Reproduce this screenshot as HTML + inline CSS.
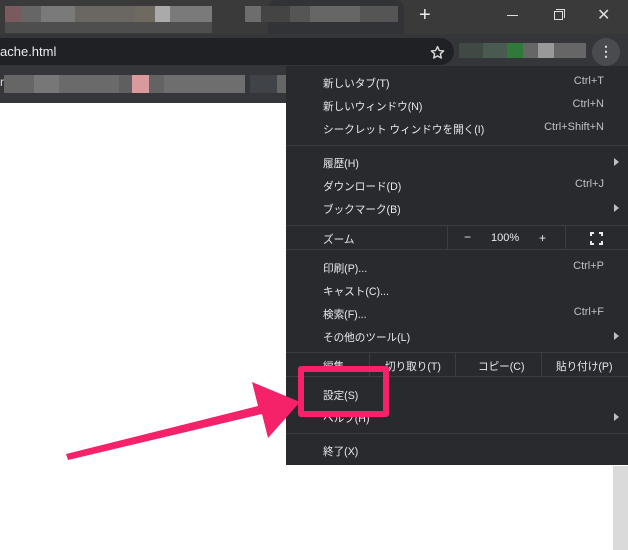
<!DOCTYPE html>
<html><head><meta charset="utf-8"><style>
*{margin:0;padding:0;box-sizing:border-box}
body{width:628px;height:550px;overflow:hidden;background:#fff;font-family:"Liberation Sans","Noto Sans CJK JP",sans-serif;position:relative}
.abs{position:absolute}
.menu{position:absolute;left:286px;top:66px;width:342px;height:399px;background:#292a2d;color:#e8eaed;font-size:10.6px}
.it{position:absolute;left:37px}
.sc{position:absolute;right:24px;color:#bdc1c6;font-size:11px}
.sep{position:absolute;left:0;right:0;height:1px;background:#3c3d41}
.vs{position:absolute;width:1px;background:#3c3d41}
.arr{position:absolute;right:9px;width:0;height:0;border-left:5px solid #bdc1c6;border-top:4px solid transparent;border-bottom:4px solid transparent}
.px{position:absolute;height:16px}
</style></head><body>
<div class="abs" style="left:0;top:0;width:628px;height:34px;background:#3a3a3b"></div>
<div class="abs" style="left:268px;top:0;width:136px;height:34px;background:#323336;border-radius:8px 8px 0 0"></div>
<div class="px" style="left:5px;top:6px;width:207px;background:linear-gradient(90deg,#7a5a5e 0 16px,#666 16px 36px,#7a7a7a 36px 70px,#6a6661 70px 130px,#6e6a60 130px 150px,#aaa 150px 165px,#7a7a7a 165px 207px)"></div>
<div class="px" style="left:5px;top:22px;width:207px;height:11px;background:#4e4e4e"></div>
<div class="px" style="left:245px;top:6px;width:153px;background:linear-gradient(90deg,#6d6d6d 0 16px,#444 16px 45px,#555 45px 65px,#666 65px 115px,#555 115px 153px)"></div>
<div class="abs" style="left:419px;top:4px;color:#eee;font-size:20px">+</div>
<div class="abs" style="left:507px;top:15px;width:11px;height:1px;background:#ddd"></div>
<div class="abs" style="left:554px;top:11px;width:9px;height:9px;border:1px solid #ddd"></div>
<div class="abs" style="left:556px;top:9px;width:9px;height:9px;border-top:1px solid #ddd;border-right:1px solid #ddd"></div>
<div class="abs" style="left:597px;top:5px;color:#ddd;font-size:16px">✕</div>
<div class="abs" style="left:0;top:34px;width:628px;height:69px;background:#35363a"></div>
<div class="abs" style="left:0;top:38px;width:454px;height:27px;background:#202124;border-radius:0 14px 14px 0"></div>
<div class="abs" style="left:0;top:44px;color:#e8eaed;font-size:13px">ache.html</div>
<div class="abs" style="left:430px;top:45px;width:15px;height:15px;z-index:5"><svg width="15" height="15" viewBox="0 0 24 24" style="display:block"><path d="M12 2.5l2.9 6.3 6.9.7-5.2 4.6 1.5 6.8L12 17.4l-6.1 3.5 1.5-6.8L2.2 9.5l6.9-.7z" fill="none" stroke="#dddddd" stroke-width="2.2" stroke-linejoin="round"/></svg></div>
<div class="px" style="left:459px;top:43px;width:127px;height:15px;background:linear-gradient(90deg,#3e4a43 0 24px,#4a5a50 24px 48px,#2f7a3a 48px 64px,#666 64px 79px,#999 79px 95px,#666 95px 127px)"></div>
<div class="abs" style="left:592px;top:38px;width:28px;height:28px;border-radius:50%;background:#4a4b4f;color:#ddd;text-align:center;font-size:14px;line-height:27px;font-weight:bold">⋮</div>
<div class="px" style="left:4px;top:75px;width:241px;height:18px;background:linear-gradient(90deg,#666 0 30px,#777 30px 55px,#6a6a6a 55px 115px,#5f5f5f 115px 128px,#d89a9c 128px 145px,#636363 145px 160px,#6e6e6e 160px 241px)"></div>
<div class="px" style="left:250px;top:75px;width:36px;height:18px;background:linear-gradient(90deg,#404348 0 27px,#666 27px 36px)"></div>
<div class="abs" style="left:0;top:75px;color:#ddd;font-size:12px">r</div>
<div class="abs" style="left:613px;top:466px;width:15px;height:84px;background:#dadada"></div>

<div class="menu">
<div class="it" style="top:10px">新しいタブ(T)</div><div class="sc" style="top:9px">Ctrl+T</div>
<div class="it" style="top:33px">新しいウィンドウ(N)</div><div class="sc" style="top:32px">Ctrl+N</div>
<div class="it" style="top:56px">シークレット ウィンドウを開く(I)</div><div class="sc" style="top:55px">Ctrl+Shift+N</div>
<div class="sep" style="top:79px"></div>
<div class="it" style="top:90px">履歴(H)</div><div class="arr" style="top:92px"></div>
<div class="it" style="top:113px">ダウンロード(D)</div><div class="sc" style="top:112px">Ctrl+J</div>
<div class="it" style="top:136px">ブックマーク(B)</div><div class="arr" style="top:138px"></div>
<div class="sep" style="top:159px"></div>
<div class="it" style="top:166px">ズーム</div>
<div class="vs" style="left:161px;top:159px;height:24px"></div>
<div class="vs" style="left:279px;top:159px;height:24px"></div>
<div class="abs" style="left:178px;top:164px;font-size:12px">−</div>
<div class="abs" style="left:205px;top:166px;font-size:11px">100%</div>
<div class="abs" style="left:253px;top:165px;font-size:12px">+</div>
<div class="abs" style="left:304px;top:166px;width:13px;height:13px;border:2px solid #e8eaed"></div>
<div class="abs" style="left:308px;top:164px;width:5px;height:17px;background:#292a2d"></div>
<div class="abs" style="left:302px;top:170px;width:17px;height:5px;background:#292a2d"></div>
<div class="sep" style="top:183px"></div>
<div class="it" style="top:195px">印刷(P)...</div><div class="sc" style="top:194px">Ctrl+P</div>
<div class="it" style="top:218px">キャスト(C)...</div>
<div class="it" style="top:241px">検索(F)...</div><div class="sc" style="top:240px">Ctrl+F</div>
<div class="it" style="top:264px">その他のツール(L)</div><div class="arr" style="top:266px"></div>
<div class="sep" style="top:286px"></div>
<div class="it" style="top:293px">編集</div>
<div class="vs" style="left:83px;top:286px;height:24px"></div>
<div class="vs" style="left:169px;top:286px;height:24px"></div>
<div class="vs" style="left:255px;top:286px;height:24px"></div>
<div class="abs" style="left:99px;top:293px">切り取り(T)</div>
<div class="abs" style="left:192px;top:293px">コピー(C)</div>
<div class="abs" style="left:270px;top:293px">貼り付け(P)</div>
<div class="sep" style="top:310px"></div>
<div class="it" style="top:322px">設定(S)</div>
<div class="it" style="top:345px">ヘルプ(H)</div><div class="arr" style="top:347px"></div>
<div class="sep" style="top:367px"></div>
<div class="it" style="top:378px">終了(X)</div>
</div>

<div class="abs" style="left:298px;top:366px;width:91px;height:51px;border:6px solid #f5226a;border-radius:3px"></div>
<svg class="abs" style="left:0;top:0" width="628" height="550">
<polygon points="68,460 262,414 268,438 300,402 252,382 258,406 66,454" fill="#f5226a"/>
</svg>
</body></html>
